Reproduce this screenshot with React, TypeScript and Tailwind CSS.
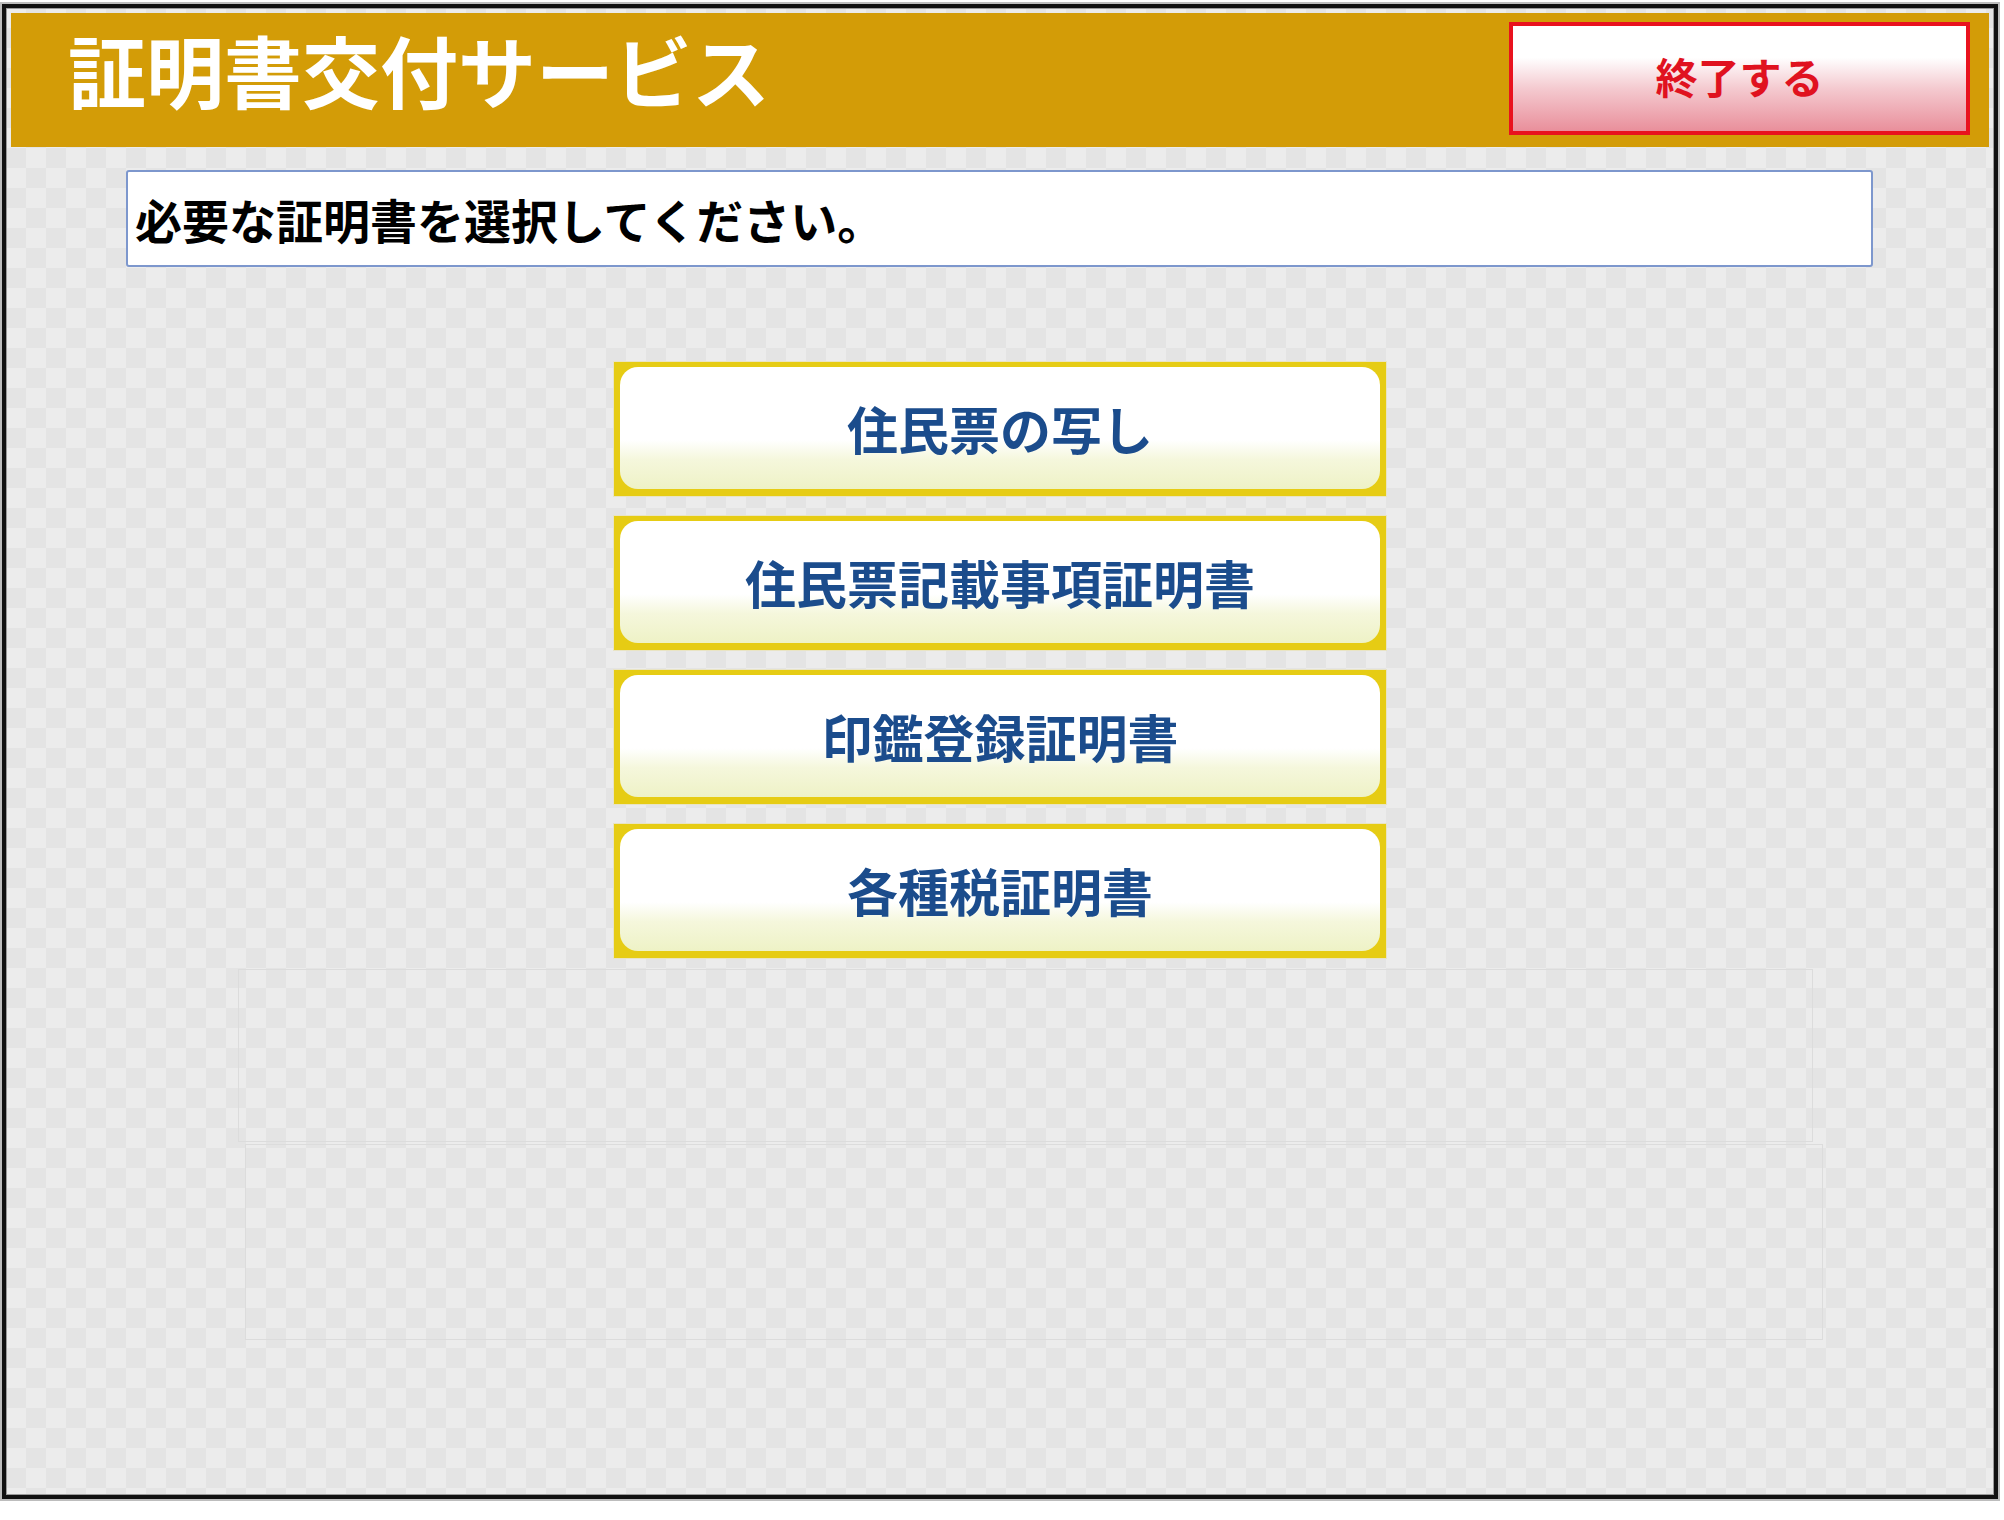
import React from 'react';

const font = { fontFamily: '"Noto Sans CJK JP", "Noto Sans", sans-serif' };

const certificates = ['住民票の写し', '住民票記載事項証明書', '印鑑登録証明書', '各種税証明書'];

const CertButton: React.FC<{ label: string }> = ({ label }) => (
  <button className="block w-[772px] h-[134px] bg-[#e6cc14] pt-[5px] pb-[7px] px-[6px] shadow-[0_0_0_1px_#e9e4c4]">
    <div className="h-full w-full rounded-[18px] bg-[linear-gradient(to_bottom,#ffffff_0%,#ffffff_60%,#f5f7dc_76%,#eef2c6_100%)] flex items-center justify-center">
      <span className="text-[51px] font-bold text-[#1b4c8c] leading-none">{label}</span>
    </div>
  </button>
);

export default function App() {
  return (
    <div className="w-[2004px] h-[1520px] bg-white pt-[4px] pl-[2px]" style={font}>
      <div className="w-[1996px] h-[1495px] border-[4px] border-[#111] shadow-[0_0_0_2px_#bdbdbd,inset_0_0_0_1px_#9a9a9a] p-[5px] flex flex-col bg-[#e7e7e7] bg-[conic-gradient(#e4e4e4_25%,#ececec_0_50%,#e4e4e4_0_75%,#ececec_0)] bg-[length:40px_40px]">
        {/* header */}
        <header className="h-[134px] shrink-0 bg-[#d39c07] flex items-center justify-between pl-[57px] pr-[19px]">
          <h1 className="text-[78px] font-bold text-white leading-none -mt-[22px]">証明書交付サービス</h1>
          <button className="w-[461px] h-[113px] mt-[-3px] border-[4px] border-[#e9121e] bg-[linear-gradient(to_bottom,#ffffff_0%,#ffffff_30%,#f4c9cf_60%,#e98f9b_100%)] flex items-center justify-center">
            <span className="text-[42px] font-bold text-[#e0121f] leading-none pb-[6px]">終了する</span>
          </button>
        </header>

        {/* message */}
        <div className="mt-[23px] ml-[115px] w-[1747px] h-[97px] bg-white border-2 border-[#7d97cd] rounded-[3px] flex items-center pl-[7px]">
          <p className="text-[47px] font-bold text-black leading-none">必要な証明書を選択してください。</p>
        </div>

        {/* certificate buttons */}
        <div className="mt-[95px] flex flex-col items-center gap-[20px]">
          {certificates.map((c) => (
            <CertButton key={c} label={c} />
          ))}
        </div>

        {/* empty panels */}
        <div className="mt-[11px] ml-[227px] w-[1575px] h-[173px] border border-[#dcdcdc]" />
        <div className="mt-[2px] ml-[234px] w-[1578px] h-[196px] border border-[#dcdcdc]" />
      </div>
    </div>
  );
}
